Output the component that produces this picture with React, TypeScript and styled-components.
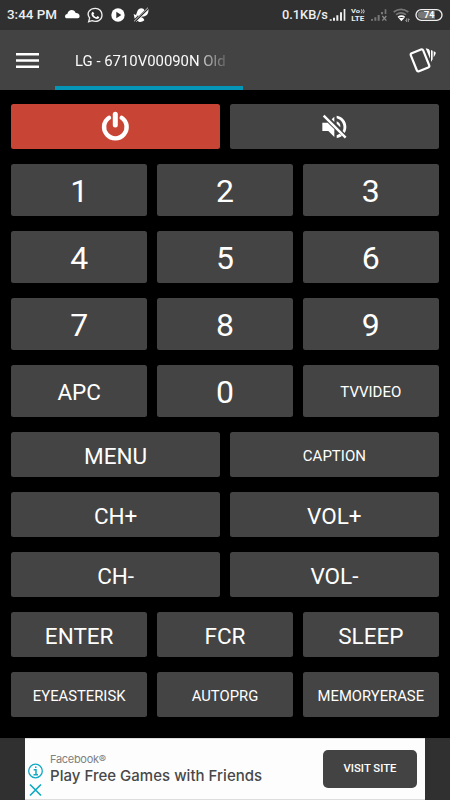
import React from "react";
import styled, { createGlobalStyle } from "styled-components";

const Global = createGlobalStyle`
  * { box-sizing: border-box; }
  body { margin: 0; background: #000; font-family: Roboto, "Liberation Sans", sans-serif; }
`;

const Screen = styled.div`
  width: 450px;
  height: 800px;
  display: flex;
  flex-direction: column;
  overflow: hidden;
  background: #000;
  color: #fff;
`;

const StatusBar = styled.header`
  height: 30px;
  flex: none;
  display: flex;
  align-items: center;
  justify-content: space-between;
  padding: 0 7px 0 7px;
  background: #303030;
  color: #eee;
`;

const StatusGroup = styled.div`
  display: flex;
  align-items: center;
  height: 30px;
`;

const StatusText = styled.span<{ $size: number; $width: number }>`
  width: ${(p) => p.$width}px;
  font-size: ${(p) => p.$size}px;
  font-weight: 500;
  line-height: 30px;
  white-space: nowrap;
`;

const Icon = styled.svg`
  display: block;
  flex: none;
`;

const Toolbar = styled.nav`
  height: 60px;
  flex: none;
  display: flex;
  align-items: center;
  background: #434343;
`;

const IconButton = styled.button<{ $width: number }>`
  width: ${(p) => p.$width}px;
  height: 60px;
  flex: none;
  padding: 0;
  border: 0;
  background: none;
`;

const Tab = styled.div`
  width: 187.5px;
  height: 60px;
  flex: none;
  padding: 0 17px 0 20px;
  border-bottom: 4px solid #0596b7;
`;

const TabTitle = styled.div`
  overflow: hidden;
  font-size: 14.9px;
  line-height: 62px;
  height: 56px;
  white-space: nowrap;
  color: #fafafa;
  mask-image: linear-gradient(to right, #000 123px, #0009 132px, #0003 150px);
`;

const Spacer = styled.div`
  flex: 1;
`;

const Keypad = styled.main`
  height: 647.5px;
  flex: none;
  display: flex;
  flex-direction: column;
  gap: 15px;
  padding: 14px 11.25px 0;
`;

const KeyRow = styled.div<{ $count: number; $height: number }>`
  display: grid;
  grid-template-columns: repeat(${(p) => p.$count}, minmax(0, 1fr));
  gap: 10px;
  height: ${(p) => p.$height}px;
  flex: none;
`;

const Key = styled.button<{ $size: number; $danger?: boolean }>`
  display: flex;
  align-items: center;
  justify-content: center;
  padding: 2px 0 0;
  border: 0;
  border-radius: 2.5px;
  background: ${(p) => (p.$danger ? "#c84435" : "#444")};
  color: #fff;
  font-family: inherit;
  font-size: ${(p) => p.$size}px;
  font-weight: 400;

  svg {
    margin: 0 1px 3px 0;
  }
`;

const AdBar = styled.footer`
  flex: 1;
  display: flex;
  justify-content: center;
  background: #303030;
`;

const Ad = styled.section`
  width: 400px;
  height: 62.5px;
  display: flex;
  background: #fdfdfd;
  border-top: 1px solid #ddd;
  border-bottom: 1px solid #ddd;
`;

const AdMarks = styled.div`
  width: 25px;
  flex: none;
  display: flex;
  flex-direction: column;
  gap: 3px;
  padding: 24px 0 0 3px;
`;

const AdCopy = styled.div`
  flex: 1;
  padding-top: 12px;
  font-family: Inter, sans-serif;
`;

const Advertiser = styled.div`
  font-size: 11px;
  line-height: 16px;
  letter-spacing: -0.3px;
  color: #808080;
`;

const Headline = styled.div`
  font-size: 15px;
  line-height: 17px;
  font-weight: 500;
  letter-spacing: 0.02px;
  white-space: nowrap;
  color: #484848;
`;

const VisitButton = styled.button`
  width: 94px;
  height: 38px;
  margin: 11px 8px 0 0;
  padding: 0;
  border: 0;
  border-radius: 5px;
  background: #434343;
  color: #fff;
  font: 500 11.3px/36px Roboto, sans-serif;
`;

const PowerIcon = () => (
  <Icon width="30" height="32" viewBox="0 0 30 32" fill="none" stroke="#fff" strokeLinecap="round">
    <path d="M9 7.7A11.3 11.3 0 1 0 21.7 7.7" strokeWidth="4.4" />
    <path d="M15.3 4.2V15" strokeWidth="5" />
  </Icon>
);

const MuteIcon = () => (
  <Icon width="26" height="26" viewBox="303 55 78 78" fill="#fff">
    <path d="M307 84H323L343 104V127L325 109H307Z" />
    <path d="M335 74L343 66V82Z" />
    <path d="M350 63C367 65 379 79 379 96C379 103 377 110 374 115L368 109C372 101 371 91 367 84C363 77 357 73 350 71Z" />
    <path d="M350 80C358 83 362 89 361 98L350 87Z" />
    <path d="M350 122L359 117L366 123C361 127 356 129 350 130Z" />
    <path d="M311 63L377 129" stroke="#fff" strokeWidth="7" />
  </Icon>
);

type KeySpec = [label: string, size: number];
const rows: { height: number; keys: KeySpec[] }[] = [
  { height: 52, keys: [["1", 32], ["2", 32], ["3", 32]] },
  { height: 52, keys: [["4", 32], ["5", 32], ["6", 32]] },
  { height: 52, keys: [["7", 32], ["8", 32], ["9", 32]] },
  { height: 52.4, keys: [["APC", 22.5], ["0", 32], ["TVVIDEO", 15]] },
  { height: 45, keys: [["MENU", 22.5], ["CAPTION", 15]] },
  { height: 45, keys: [["CH+", 22.5], ["VOL+", 22.5]] },
  { height: 45, keys: [["CH-", 22.5], ["VOL-", 22.5]] },
  { height: 45, keys: [["ENTER", 22.5], ["FCR", 22.5], ["SLEEP", 22.5]] },
  { height: 45, keys: [["EYEASTERISK", 14.8], ["AUTOPRG", 14.8], ["MEMORYERASE", 14.8]] },
];

const Notifications = () => (
  <Icon width="90" height="30" viewBox="190 0 270 90" fill="#fff">
    <path d="M202 55C194 55 194 43 203 42C206 26 225 27 228 39C241 38 244 54 234 55Z" />
    <path d="M267 65L270 54C258 37 272 25 287 25C299 25 307 34 307 45C307 61 291 68 277 62Z" fill="none" stroke="#eee" strokeWidth="4" />
    <path d="M279 35L284 40L281 44C284 49 287 51 290 52L294 48L299 52C296 58 291 58 284 54C276 49 272 41 279 35Z" />
    <circle cx="355" cy="45" r="20" />
    <path d="M350 35L365 45L350 55Z" fill="#303030" />
    <path d="M413 34C417 22 433 23 434 32L418 48L409 45ZM436 39L446 29C448 43 437 52 424 49ZM402 42L414 47L405 56ZM414 57C422 49 431 51 434 61C426 67 418 67 414 62Z" />
    <path d="M404 66L446 24" stroke="#303030" strokeWidth="7" />
    <path d="M403 64L445 23M410 65L447 29" stroke="#eee" strokeWidth="2.5" />
  </Icon>
);

const Connectivity = () => (
  <Icon width="114" height="30" viewBox="178 0 342 90">
    <g fill="#eee">
      <path d="M180 58H186V62H180ZM190 53H196V62H190ZM200 46H206V62H200ZM211 37H217V62H211ZM222 27H227V62H222Z" />
      <text x="244" y="39" fontSize="18" fontWeight="700" fontFamily="Roboto" textLength="27" lengthAdjust="spacingAndGlyphs">Vo</text>
      <text x="245" y="62" fontSize="19" fontWeight="700" fontFamily="Roboto" textLength="39" lengthAdjust="spacingAndGlyphs">LTE</text>
    </g>
    <path d="M275 28Q280 34 275 40M281 28Q286 34 281 40" fill="none" stroke="#eee" strokeWidth="2.5" />
    <path d="M304 57H310V62H304ZM314 52H320V62H314ZM324 45H330V62H324ZM334 36H340V43H334ZM345 28H350V42H345Z" fill="#777" />
    <path d="M338 48L350 62M350 48L338 62" stroke="#888" strokeWidth="4" />
    <g fill="none" strokeWidth="5">
      <path d="M372 36Q394 20 416 36M379 44Q394 33 409 44" stroke="#777" />
      <path d="M385 52Q396 45 405 52" stroke="#fff" />
    </g>
    <path d="M387 54H404L395 64Z" fill="#fff" />
    <path d="M411 55V65L407 61M416 66V56L420 60" fill="none" stroke="#aaa" strokeWidth="2.5" />
    <rect x="439" y="29" width="78" height="32" rx="16" fill="none" stroke="#eee" strokeWidth="4" />
    <path d="M455 34H496V56H455C440 56 440 34 455 34Z" fill="#777" />
    <text x="463" y="55" fontSize="28" fontWeight="700" fontFamily="Roboto" textLength="31" lengthAdjust="spacingAndGlyphs" fill="#fff">74</text>
  </Icon>
);

export default function App() {
  return (
    <>
      <Global />
      <Screen>
        <StatusBar>
          <StatusGroup>
            <StatusText $size={13.4} $width={56.3}>3:44 PM</StatusText>
            <Notifications />
          </StatusGroup>
          <StatusGroup>
            <StatusText $size={12.8} $width={47}>0.1KB/s</StatusText>
            <Connectivity />
          </StatusGroup>
        </StatusBar>
        <Toolbar>
          <IconButton $width={55} aria-label="Menu">
            <Icon width="55" height="60" viewBox="0 0 55 60">
              <path d="M16 24.2H39M16 30.6H39M16 36.8H39" stroke="#fff" strokeWidth="2.5" />
            </Icon>
          </IconButton>
          <Tab><TabTitle>LG - 6710V00090N Old</TabTitle></Tab>
          <Spacer />
          <IconButton $width={60} aria-label="Remotes">
            <Icon width="60" height="60" viewBox="0 0 180 180">
              <rect x="70" y="62" width="40" height="58" rx="5" transform="rotate(-22 90 91)" fill="none" stroke="#fff" strokeWidth="6.5" />
              <path d="M107 55L113 56C119 58 120 62 120 67V86ZM123 60L128 62V88L123 96ZM131 64L136 66C139 69 136 74 131 82Z" fill="#fff" />
            </Icon>
          </IconButton>
        </Toolbar>
        <Keypad>
          <KeyRow $count={2} $height={45}>
            <Key $size={22} $danger aria-label="Power"><PowerIcon /></Key>
            <Key $size={22} aria-label="Mute"><MuteIcon /></Key>
          </KeyRow>
          {rows.map(({ height, keys }) => (
            <KeyRow key={keys[0][0]} $count={keys.length} $height={height}>
              {keys.map(([label, size]) => <Key key={label} $size={size}>{label}</Key>)}
            </KeyRow>
          ))}
        </Keypad>
        <AdBar>
          <Ad>
            <AdMarks>
              <Icon width="15" height="16" viewBox="0 0 15 16" fill="none" stroke="#12a9c5">
                <circle cx="7.5" cy="8" r="6.8" strokeWidth="1.3" />
                <path d="M5.7 6.8H8V11.6M5.5 11.8H10M7 4.3H8.5" strokeWidth="1.5" />
              </Icon>
              <Icon width="15" height="16" viewBox="0 0 15 16" stroke="#12a9c5" strokeWidth="1.7">
                <path d="M2 2.5L13 13.5M13 2.5L2 13.5" />
              </Icon>
            </AdMarks>
            <AdCopy>
              <Advertiser>Facebook®</Advertiser>
              <Headline>Play Free Games with Friends</Headline>
            </AdCopy>
            <VisitButton>VISIT SITE</VisitButton>
          </Ad>
        </AdBar>
      </Screen>
    </>
  );
}
